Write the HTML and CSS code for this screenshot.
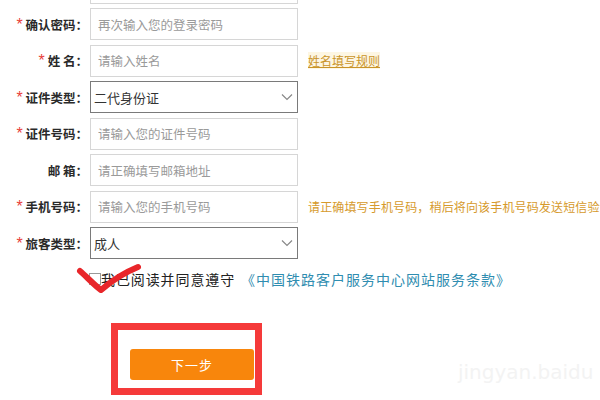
FILE: index.html
```html
<!DOCTYPE html>
<html lang="zh-CN">
<head>
    <meta charset="UTF-8">
    <meta name="viewport" content="width=device-width, initial-scale=1.0">
    <title>注册 - 填写信息</title>
    <link rel="stylesheet" href="styles.css">
</head>
<body>
    <div class="page">
        <form class="reg-form">
            <div class="row">
                <span class="label"></span>
                <input class="field" type="password">
            </div>
            <div class="row">
                <label class="label"><span class="star">*</span> 确认密码：</label>
                <input class="field" type="password" placeholder="再次输入您的登录密码">
            </div>
            <div class="row">
                <label class="label"><span class="star">*</span> 姓&nbsp;名：</label>
                <input class="field" type="text" placeholder="请输入姓名">
                <a class="hint-link" href="#">姓名填写规则</a>
            </div>
            <div class="row">
                <label class="label"><span class="star">*</span> 证件类型：</label>
                <div class="select">
                    <span>二代身份证</span>
                    <svg class="chevron" width="12" height="8" viewBox="0 0 12 8"><path d="M1 1.5 L6 6.5 L11 1.5" fill="none" stroke="#888" stroke-width="1.2"/></svg>
                </div>
            </div>
            <div class="row">
                <label class="label"><span class="star">*</span> 证件号码：</label>
                <input class="field" type="text" placeholder="请输入您的证件号码">
            </div>
            <div class="row">
                <label class="label">邮&nbsp;箱：</label>
                <input class="field" type="text" placeholder="请正确填写邮箱地址">
            </div>
            <div class="row">
                <label class="label"><span class="star">*</span> 手机号码：</label>
                <input class="field" type="text" placeholder="请输入您的手机号码">
                <span class="hint">请正确填写手机号码，稍后将向该手机号码发送短信验证码</span>
            </div>
            <div class="row">
                <label class="label"><span class="star">*</span> 旅客类型：</label>
                <div class="select">
                    <span>成人</span>
                    <svg class="chevron" width="12" height="8" viewBox="0 0 12 8"><path d="M1 1.5 L6 6.5 L11 1.5" fill="none" stroke="#888" stroke-width="1.2"/></svg>
                </div>
            </div>

            <div class="agree">
                <span class="checkbox"></span>
                <span class="agree-text">我已阅读并同意遵守</span>
                <a class="agree-link" href="#">《中国铁路客户服务中心网站服务条款》</a>
            </div>

            <div class="actions">
                <button class="next-btn" type="button">下一步</button>
            </div>
        </form>

        <!-- annotations drawn on top of the screenshot -->
        <svg class="mark-check" width="70" height="34" viewBox="0 0 70 34">
            <path d="M4 9 C10 14 17 22 25 28 C33 21 45 12 62 5" fill="none" stroke="#e8262a" stroke-width="6" stroke-linecap="round" stroke-linejoin="round"/>
        </svg>
        <div class="mark-box"></div>
        <div class="watermark">jingyan.baidu</div>
    </div>
</body>
</html>
```

FILE: styles.css
```css
body {
    margin: 0;
    background: #fff;
    font-family: "Noto Sans CJK SC", "Noto Sans", sans-serif;
    color: #333;
    overflow: hidden;
}

.page {
    position: relative;
    width: 600px;
    height: 400px;
    overflow: hidden;
}

.reg-form {
    display: flex;
    flex-direction: column;
    gap: 4.5px;
    margin-top: -28.5px;
}

.row {
    display: flex;
    align-items: center;
    height: 32px;
}

.label {
    width: 88px;
    flex-shrink: 0;
    margin-right: 2px;
    text-align: right;
    font-size: 12.5px;
    font-weight: bold;
    color: #2a2a2a;
    white-space: nowrap;
}

.star {
    color: #e8403a;
    font-family: "Liberation Sans", sans-serif;
    font-size: 16px;
    font-weight: normal;
}

.field {
    box-sizing: border-box;
    flex-shrink: 0;
    width: 208px;
    height: 32px;
    margin: 0;
    padding: 0 7px;
    border: 1px solid #d6d6d6;
    border-radius: 0;
    font-family: inherit;
    font-size: 12.5px;
    color: #333;
    background: #fff;
    outline: none;
}

.field::placeholder {
    color: #9a9a9a;
}

.select {
    box-sizing: border-box;
    flex-shrink: 0;
    width: 208px;
    height: 32px;
    display: flex;
    align-items: center;
    justify-content: space-between;
    padding: 0 4px 0 3px;
    border: 1px solid #7a7a7a;
    font-size: 13px;
    color: #333;
}

.hint-link {
    margin-left: 10px;
    font-size: 12px;
    color: #c99428;
    text-decoration: underline;
    background: #fdf6e3;
}

.hint {
    flex-shrink: 0;
    margin-left: 10px;
    font-size: 12px;
    letter-spacing: 0.15px;
    color: #d69a2c;
    white-space: nowrap;
}

.agree {
    display: flex;
    align-items: center;
    height: 20px;
    margin-top: 5px;
    padding-left: 89px;
    font-size: 14px;
    letter-spacing: 0.9px;
    white-space: nowrap;
}

.checkbox {
    box-sizing: border-box;
    width: 12px;
    height: 12px;
    border: 1px solid #999;
    flex-shrink: 0;
}

.agree-text {
    color: #222;
}

.agree-link {
    margin-left: 6px;
    color: #2f8db0;
    text-decoration: none;
    letter-spacing: 1px;
}

.actions {
    padding-left: 130px;
    margin-top: 56px;
}

.next-btn {
    width: 124px;
    height: 31px;
    border: none;
    border-radius: 3px;
    background: #f8860c;
    color: #fff;
    font-family: inherit;
    font-size: 13px;
    letter-spacing: 1px;
    cursor: pointer;
}

.mark-check {
    position: absolute;
    left: 76px;
    top: 262px;
}

.mark-box {
    position: absolute;
    left: 111px;
    top: 323px;
    width: 151px;
    height: 72px;
    box-sizing: border-box;
    border: 7px solid #f53a3a;
}

.watermark {
    position: absolute;
    left: 458px;
    top: 360px;
    font-family: "DejaVu Sans", sans-serif;
    font-size: 20px;
    color: #f3f3f3;
}
```
